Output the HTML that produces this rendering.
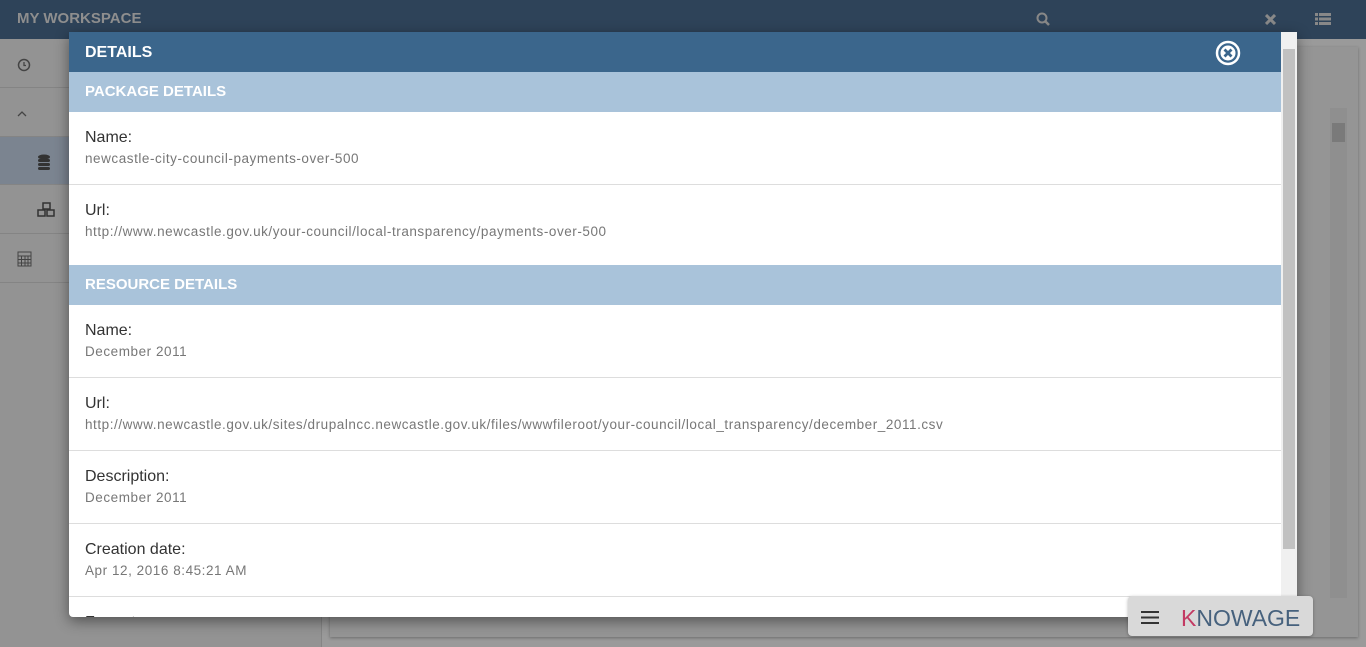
<!DOCTYPE html>
<html><head><style>
*{margin:0;padding:0;box-sizing:border-box}
body{width:1366px;height:647px;overflow:hidden;position:relative;background:#9a9a9a;font-family:"Liberation Sans",sans-serif}
.top{position:absolute;left:0;top:0;width:1366px;height:39px;background:#2e4359}
.top .t{position:absolute;left:17px;top:10px;color:#8e8e8e;font-weight:bold;font-size:15px}
.side{position:absolute;left:0;top:39px;width:322px;height:608px;background:#939393;border-right:1px solid #858585}
.side .r{position:absolute;left:0;width:322px;border-bottom:1px solid #848484}
.main{position:absolute;left:330px;top:47px;width:1028px;height:590px;background:#959595;box-shadow:0 1px 3px rgba(0,0,0,.3)}
.modal{position:absolute;left:69px;top:32px;width:1228px;height:585px;background:#fff;overflow:hidden;box-shadow:0 4px 14px rgba(0,0,0,.45);border-radius:0 0 4px 4px}
.mh{height:40px;background:#3b668c;color:#fff;font-weight:bold;font-size:16px;padding:12px 16px}
.sh{height:40px;background:#a9c3da;color:#fff;font-weight:bold;font-size:15px;padding:11px 16px}
.row{height:73px;border-bottom:1px solid #ddd;padding:17px 16px 0}
.row .l{font-size:16px;color:#333;line-height:18px}
.row .v{font-size:13.5px;color:#777;margin-top:4px;letter-spacing:.55px}
.sb{position:absolute;left:1212px;top:0;width:16px;height:585px;background:#f0f0f0}
.sb .th{position:absolute;left:2px;top:17px;width:12px;height:500px;background:#c1c1c1}
.kn{position:absolute;left:1128px;top:596px;width:185px;height:40px;background:#d9d9d9;border-radius:4px;box-shadow:0 1px 3px rgba(0,0,0,.3)}
</style></head><body>
<div class="top"><div class="t">MY WORKSPACE</div>
<svg style="position:absolute;left:1036px;top:12px" width="14" height="14"><circle cx="6" cy="6" r="4.5" fill="none" stroke="#888" stroke-width="2"/><path d="M9 9l4 4" stroke="#888" stroke-width="2.5"/></svg>
<svg style="position:absolute;left:1265px;top:14px" width="11" height="11"><path d="M1 1l9 9M10 1l-9 9" stroke="#888" stroke-width="3"/></svg>
<svg style="position:absolute;left:1315px;top:13px" width="16" height="12" fill="#888"><rect x="0" y="0" width="3" height="3"/><rect x="4" y="0" width="12" height="3"/><rect x="0" y="4.5" width="3" height="3"/><rect x="4" y="4.5" width="12" height="3"/><rect x="0" y="9" width="3" height="3"/><rect x="4" y="9" width="12" height="3"/></svg>
</div>
<div class="side">
<div class="r" style="top:0;height:49px"><svg style="position:absolute;left:17px;top:19px" width="14" height="14"><circle cx="7" cy="7" r="5.5" fill="none" stroke="#444" stroke-width="1.5"/><path d="M7 4v3.5h2" stroke="#444" stroke-width="1.3" fill="none"/></svg></div>
<div class="r" style="top:49px;height:49px"><svg style="position:absolute;left:17px;top:23px" width="10" height="6"><path d="M1 5l4-4 4 4" stroke="#444" fill="none" stroke-width="1.3"/></svg></div>
<div class="r" style="top:98px;height:48px;background:#7b8490"><svg style="position:absolute;left:37px;top:17px" width="14" height="16" fill="#333"><ellipse cx="7" cy="3" rx="6" ry="2.5"/><rect x="1" y="5" width="12" height="3" rx="1.5"/><rect x="1" y="9" width="12" height="3" rx="1.5"/><rect x="1" y="13" width="12" height="3" rx="1.5"/></svg></div>
<div class="r" style="top:146px;height:49px"><svg style="position:absolute;left:37px;top:17px" width="20" height="16" fill="none" stroke="#333" stroke-width="1.5"><rect x="6" y="1" width="7" height="6"/><rect x="1" y="8" width="7" height="6"/><rect x="10" y="8" width="7" height="6"/></svg></div>
<div class="r" style="top:195px;height:49px"><svg style="position:absolute;left:17px;top:17px" width="15" height="16" fill="none" stroke="#444"><rect x="1" y="1" width="13" height="14"/><path d="M1 5h13M1 8.5h13M1 12h13M4.5 5v10M8 5v10M11 5v10"/></svg></div>
</div>
<div class="main"><div style="position:absolute;left:1000px;top:61px;width:17px;height:490px;background:#8f8f8f"><div style="position:absolute;left:2px;top:15px;width:13px;height:19px;background:#7a7a7a"></div></div></div>
<div class="modal">
<div class="mh">DETAILS<svg style="position:absolute;left:1146px;top:8px" width="26" height="26"><circle cx="13" cy="13" r="11" fill="none" stroke="#fff" stroke-width="2.5"/><circle cx="13" cy="13" r="7.5" fill="#fff"/><path d="M9.5 9.5l7 7M16.5 9.5l-7 7" stroke="#3b668c" stroke-width="2.8"/></svg></div>
<div class="sh">PACKAGE DETAILS</div>
<div class="row"><div class="l">Name:</div><div class="v">newcastle-city-council-payments-over-500</div></div>
<div class="row" style="height:80px;border:0"><div class="l">Url:</div><div class="v">http://www.newcastle.gov.uk/your-council/local-transparency/payments-over-500</div></div>
<div class="sh">RESOURCE DETAILS</div>
<div class="row"><div class="l">Name:</div><div class="v">December 2011</div></div>
<div class="row"><div class="l">Url:</div><div class="v">http://www.newcastle.gov.uk/sites/drupalncc.newcastle.gov.uk/files/wwwfileroot/your-council/local_transparency/december_2011.csv</div></div>
<div class="row"><div class="l">Description:</div><div class="v">December 2011</div></div>
<div class="row"><div class="l">Creation date:</div><div class="v">Apr 12, 2016 8:45:21 AM</div></div>
<div class="row" style="border:0"><div class="l">Format:</div></div>
<div class="sb"><div class="th"></div></div>
</div>
<div class="kn"><svg style="position:absolute;left:13px;top:15px" width="18" height="13" fill="#333"><rect y="0" width="18" height="2"/><rect y="5.5" width="18" height="2"/><rect y="11" width="18" height="2"/></svg><div style="position:absolute;left:53px;top:9px;font-size:23px;color:#46617d"><span style="color:#c33a63">K</span>NOWAGE</div></div>
</body></html>
